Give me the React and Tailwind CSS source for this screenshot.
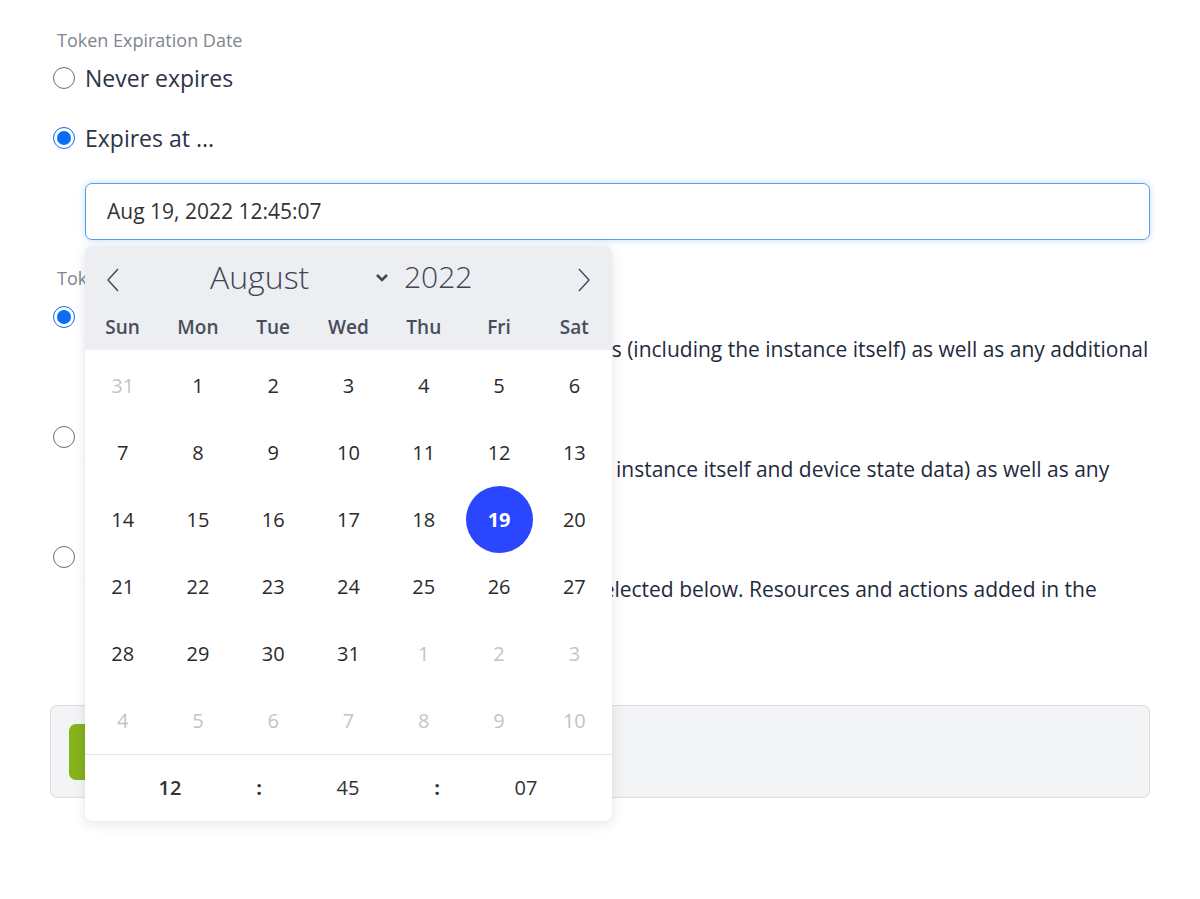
import React from "react";

function Radio({ checked }) {
  return checked ? (
    <span className="flex h-[22px] w-[22px] shrink-0 items-center justify-center rounded-full border-[1.5px] border-[#0b6cf5] bg-white">
      <span className="h-[14px] w-[14px] rounded-full bg-[#0b6cf5]" />
    </span>
  ) : (
    <span className="block h-[22px] w-[22px] shrink-0 rounded-full border-[1.5px] border-[#6e6e6e] bg-white" />
  );
}

const weekdays = ["Sun", "Mon", "Tue", "Wed", "Thu", "Fri", "Sat"];

const weeks = [
  [[31, 1], [1], [2], [3], [4], [5], [6]],
  [[7], [8], [9], [10], [11], [12], [13]],
  [[14], [15], [16], [17], [18], [19, 2], [20]],
  [[21], [22], [23], [24], [25], [26], [27]],
  [[28], [29], [30], [31], [1, 1], [2, 1], [3, 1]],
  [[4, 1], [5, 1], [6, 1], [7, 1], [8, 1], [9, 1], [10, 1]],
];

function Calendar() {
  return (
    <div className="absolute left-0 top-full z-10 mt-[6px] w-[527px] overflow-hidden rounded-[7px] bg-white shadow-[0_3px_14px_rgba(0,0,0,0.10),0_0_2px_rgba(0,0,0,0.06)]">
      <div className="bg-[#eceef2] pb-[4px]">
        <div className="flex h-[62px] items-center">
          <div className="flex w-[56px] justify-center pt-[6px]">
            <svg width="14" height="24" viewBox="0 0 14 24" fill="none" stroke="#3f4657" strokeWidth="1.4">
              <path d="M12 1 L2 12 L12 23" />
            </svg>
          </div>
          <div className="flex flex-1 items-center">
            <span className="ml-[69px] w-[165px] text-[32px] font-light leading-none text-[#3f4657]">August</span>
            <svg width="14" height="10" viewBox="0 0 14 10" fill="none" stroke="#3f4657" strokeWidth="2.6" className="mt-[2px]">
              <path d="M2 2 L7 7 L12 2" />
            </svg>
            <span className="ml-[15px] text-[30px] font-light leading-none text-[#3f4657]">2022</span>
          </div>
          <div className="flex w-[56px] justify-center pt-[6px]">
            <svg width="14" height="24" viewBox="0 0 14 24" fill="none" stroke="#3f4657" strokeWidth="1.4">
              <path d="M2 1 L12 12 L2 23" />
            </svg>
          </div>
        </div>
        <div className="grid h-[38px] grid-cols-7 items-center">
          {weekdays.map((d) => (
            <div key={d} className="text-center text-[19px] font-semibold text-[#474d5a]">
              {d}
            </div>
          ))}
        </div>
      </div>
      <div className="pt-[2px]">
        {weeks.map((w, i) => (
          <div key={i} className="grid h-[67px] grid-cols-7">
            {w.map(([n, t], j) => (
              <div key={j} className="flex items-center justify-center">
                {t === 2 ? (
                  <span className="flex h-[67px] w-[67px] items-center justify-center rounded-full bg-[#2b46ff] text-[20px] font-bold text-white">
                    {n}
                  </span>
                ) : (
                  <span className={"text-[20px] " + (t === 1 ? "text-[#c4c4c4]" : "text-[#2a2a2a]")}>{n}</span>
                )}
              </div>
            ))}
          </div>
        ))}
      </div>
      <div className="flex h-[67px] items-center border-t border-[#e6e6e6] text-[20px] text-[#333]">
        <div className="w-[170px] text-center font-semibold">12</div>
        <div className="w-[8px] text-center font-bold">:</div>
        <div className="w-[170px] text-center">45</div>
        <div className="w-[8px] text-center font-bold">:</div>
        <div className="w-[170px] text-center">07</div>
      </div>
    </div>
  );
}

function Option({ checked, title, lines }) {
  return (
    <div className="flex">
      <div className="flex h-[32px] w-[35px] shrink-0 items-center pl-[3px]">
        <Radio checked={checked} />
      </div>
      <div className="flex-1 text-[21px] leading-[32px] text-[#1f2a3c]">
        <div className="text-[22px]">{title}</div>
        {lines.map((l, i) => (
          <div key={i} className="whitespace-nowrap">{l}</div>
        ))}
      </div>
    </div>
  );
}

export default function App() {
  return (
    <div className="min-h-[899px] w-[1200px] bg-white px-[50px] pt-[28px] font-['Open_Sans',sans-serif]">
      <div className="pl-[7px] text-[18px] leading-[24px] text-[#80858f]">Token Expiration Date</div>
      <div className="mt-[8px] flex h-[36px] items-center">
        <div className="w-[35px] shrink-0 pl-[3px]">
          <Radio />
        </div>
        <span className="text-[23px] text-[#2d3446]">Never expires</span>
      </div>
      <div className="mt-[24px] flex h-[36px] items-center">
        <div className="w-[35px] shrink-0 pl-[3px]">
          <Radio checked />
        </div>
        <span className="text-[23px] text-[#2d3446]">Expires at ...</span>
      </div>
      <div className="relative ml-[35px] mt-[27px]">
        <div className="flex h-[57px] items-center rounded-[7px] border-[1.5px] border-[#5b9fe9] bg-white px-[21px] text-[21px] text-[#333] shadow-[0_0_7px_rgba(80,150,235,0.35)]">
          Aug 19, 2022 12:45:07
        </div>
        <Calendar />
      </div>
      <div className="mt-[26px] pl-[7px] text-[18px] leading-[24px] text-[#80858f]">Token Scope</div>
      <div className="mt-[11px] flex flex-col gap-[24px]">
        <Option
          checked
          title="Full Access"
          lines={[
            "The token will have access to all the instance resources (including the instance itself) as well as any additional",
            "resources added in the future.",
          ]}
        />
        <Option
          title="Read Only"
          lines={[
            "The token can read and write resources (including the instance itself and device state data) as well as any",
            "additional resources.",
          ]}
        />
        <Option
          title="Custom"
          lines={[
            "The token will have access to resources and actions selected below. Resources and actions added in the",
            "future will not be accessible.",
          ]}
        />
      </div>
      <div className="mt-[68px] flex h-[93px] items-center rounded-[7px] border border-[#dcdde0] bg-[#f3f4f6] px-[18px]">
        <button className="h-[56px] w-[160px] rounded-[7px] bg-[#86b21b] text-[19px] text-white">Create Token</button>
      </div>
    </div>
  );
}
